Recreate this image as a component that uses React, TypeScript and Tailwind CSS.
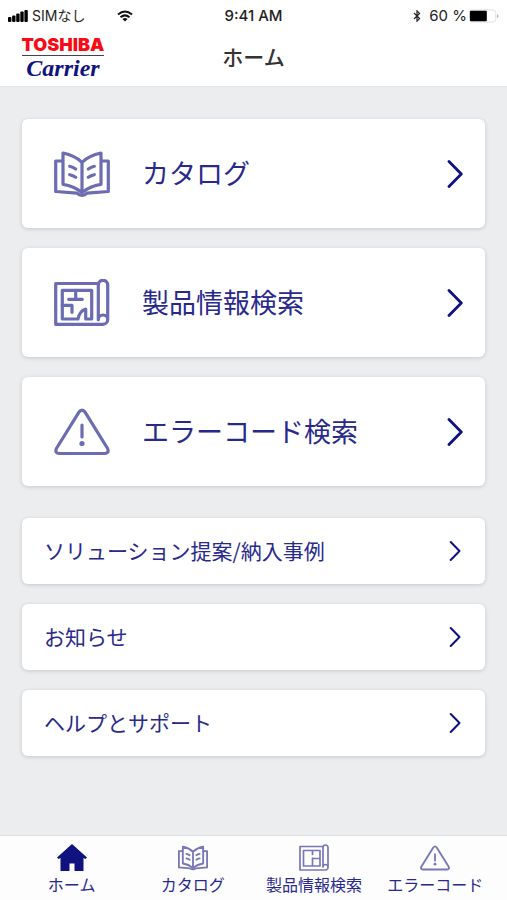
import type { ReactNode } from "react";

function BookIcon({ className, strokeWidth = 3.2 }: { className: string; strokeWidth?: number }) {
  return (
    <svg viewBox="0 0 56 46" fill="none" stroke="currentColor" strokeWidth={strokeWidth} strokeLinecap="round" strokeLinejoin="round" className={className} aria-hidden="true">
      <path d="M8.500 10H1.700V40.500L23 42.200Q25 44.300 28 44.300Q31 44.300 33 42.200L54.300 40.500V10H47.500" />
      <path d="M28 11.300Q21 4.500 9 2V33.300Q20 35 28 41.500Q36 35 47 33.300V2Q35 4.500 28 11.300ZV42" />
      <path d="M15.700 15.300Q19 16 21.700 18M15.700 23.700Q19 24.400 21.700 26.300M40.300 15.300Q37 16 34.300 18M40.300 23.700Q37 24.400 34.300 26.300" />
    </svg>
  );
}

function PlanIcon({ className }: { className: string }) {
  return (
    <svg viewBox="0 0 56 48" fill="none" stroke="currentColor" strokeWidth="3.2" strokeLinecap="round" strokeLinejoin="round" className={className} aria-hidden="true">
      <path d="M43.500 4.500H1.700V45.300H49A4.700 4.700 0 0 0 53.700 40.700V6A4.700 4.700 0 0 0 44.300 6V40.700A4.700 4.700 0 0 1 53.700 40.700" />
      <path d="M23.500 40H8.300V11.300H37.700V40H31.700V30Q25.500 32 24 40" />
      <path d="M21.700 11.300V20.300M14.700 20.300H28.300M8.300 26.300H18V33.300" />
    </svg>
  );
}

function SmallPlanIcon({ className }: { className: string }) {
  return (
    <svg viewBox="0 0 30 28" fill="none" stroke="currentColor" strokeWidth="1.7" strokeLinecap="round" strokeLinejoin="round" className={className} aria-hidden="true">
      <path d="M24 2.500H1V26H26.500A2.500 2.500 0 0 0 29 23.500V3.500A2.500 2.500 0 0 0 24 3.500V23A2.500 2.500 0 0 1 29 23" />
      <path d="M4.500 6.500H21V22H4.500ZM13.500 6.500V10.500M13.500 14V22M13.500 14.500H21" />
    </svg>
  );
}

function WarningIcon({ className, strokeWidth = 3.2 }: { className: string; strokeWidth?: number }) {
  return (
    <svg viewBox="0 0 56 48" fill="none" stroke="currentColor" strokeWidth={strokeWidth} strokeLinecap="round" strokeLinejoin="round" className={className} aria-hidden="true">
      <path d="M24.800 4.300Q28 0 31.200 4.300L53.600 40.500Q55.500 45.500 50.500 45.500H5.500Q.5 45.500 2.400 40.500Z" />
      <path d="M28 17V29" />
      <circle cx="28" cy="35.500" r="2.600" fill="currentColor" stroke="none" />
    </svg>
  );
}

function HomeIcon({ className }: { className: string }) {
  return (
    <svg viewBox="0 0 30 28" fill="currentColor" className={className} aria-hidden="true">
      <path d="M15 0L30 13.500L28.500 15L26.500 14V27H17.500V19.500H12.500V27H3.500V14L1.500 15L0 13.500Z" />
    </svg>
  );
}

function Chevron({ className }: { className: string }) {
  return (
    <svg viewBox="0 0 16 28" fill="none" stroke="currentColor" strokeWidth="2.8" strokeLinecap="round" strokeLinejoin="round" className={className} aria-hidden="true">
      <path d="M2 1.500L14.300 14L2 26.500" />
    </svg>
  );
}

function StatusBar() {
  return (
    <div className="grid h-7 grid-cols-3 items-center px-2 pt-1 font-['Inter','Noto_Sans_CJK_JP',sans-serif] text-sm text-[#222]">
      <div className="flex items-center gap-1">
        <svg viewBox="0 0 20 12" className="h-3 w-5" aria-hidden="true">
          <rect x="0" y="7" width="3.400" height="5" rx="1" />
          <rect x="4.100" y="5.500" width="3.400" height="6.500" rx="1" />
          <rect x="8.200" y="3.500" width="3.400" height="8.500" rx="1" />
          <rect x="12.300" y="1.500" width="3.400" height="10.500" rx="1" />
          <rect x="16.400" y="0" width="3.400" height="12" rx="1" />
        </svg>
        <span>SIMなし</span>
        <svg viewBox="0 0 16 12" fill="none" stroke="#111" strokeWidth="2" className="ml-7 h-3 w-4" aria-hidden="true">
          <path d="M1 4.500Q8 -1.500 15 4.500M3.500 7.200Q8 3.500 12.500 7.200" />
          <path d="M8 11.500L5.400 9Q8 7 10.600 9Z" fill="#111" stroke="none" />
        </svg>
      </div>
      <div className="text-center text-[15px] font-medium">9:41 AM</div>
      <div className="flex items-center justify-end">
        <svg viewBox="0 0 8 14" fill="none" stroke="#222" strokeWidth="1.4" className="mr-2 h-3 w-2" aria-hidden="true">
          <path d="M.5 3.500L7 10L4 13V1L7 4L.5 10.500" />
        </svg>
        <span className="mr-0.5 text-[15px]">60 %</span>
        <svg viewBox="0 0 32 14" className="h-3.5 w-[30px]" aria-hidden="true">
          <rect x=".5" y=".5" width="28" height="13" rx="3" fill="#fff" stroke="#ddd" />
          <rect x="1" y="1.500" width="18" height="11" rx="1" fill="#000" />
          <path d="M30 5V9Q31.500 8.500 31.500 7T30 5Z" fill="#aaa" />
        </svg>
      </div>
    </div>
  );
}

function Card({ icon, children }: { icon: ReactNode; children: ReactNode }) {
  return (
    <a href="#" className="flex h-[109px] items-center rounded-md bg-white pr-[22px] pl-8 text-[27px] shadow-[0_1px_4px_rgba(0,0,0,0.16)]">
      <span className="mr-8 text-[#6c6cb2]">{icon}</span>
      <span className="grow">{children}</span>
      <Chevron className="h-7 w-4 text-[#0d1280]" />
    </a>
  );
}

function Row({ children }: { children: ReactNode }) {
  return (
    <a href="#" className="flex h-[66px] items-center justify-between rounded-md bg-white pr-6 pl-[22px] text-[21px] shadow-[0_1px_4px_rgba(0,0,0,0.16)]">
      <span>{children}</span>
      <Chevron className="h-5 w-3 text-[#0d1280]" />
    </a>
  );
}

function Tab({ icon, children }: { icon: ReactNode; children: ReactNode }) {
  return (
    <a href="#" className="flex flex-col items-center pt-2 text-base leading-6 whitespace-nowrap">
      {icon}
      <span>{children}</span>
    </a>
  );
}

export default function App() {
  return (
    <div className="flex min-h-screen flex-col bg-[#ebedee] font-['Noto_Sans_CJK_JP',sans-serif] text-[#29298c]">
      <header className="border-b border-[#e2e3e4] bg-white">
        <StatusBar />
        <div className="grid h-[58px] grid-cols-3 items-center px-[22px]">
          <div className="w-[82px] text-center">
            <div className="flex justify-center border-b border-[#444] font-['Inter',sans-serif] text-lg leading-5 font-black text-[#fa0a14]">TOSHIBA</div>
            <div className="font-['Liberation_Serif',serif] text-2xl leading-6 font-bold text-[#10127f] italic">Carrier</div>
          </div>
          <h1 className="text-center text-[21px] font-medium text-[#333]">ホーム</h1>
        </div>
      </header>

      <main className="grow px-[22px] pt-8 pb-6">
        {/* Main menu */}
        <div className="space-y-5">
          <Card icon={<BookIcon className="h-[46px] w-14" />}>カタログ</Card>
          <Card icon={<PlanIcon className="h-12 w-14" />}>製品情報検索</Card>
          <Card icon={<WarningIcon className="h-12 w-14" />}>エラーコード検索</Card>
        </div>

        {/* Other links */}
        <div className="mt-8 space-y-5">
          <Row>ソリューション提案/納入事例</Row>
          <Row>お知らせ</Row>
          <Row>ヘルプとサポート</Row>
        </div>
      </main>

      <nav className="sticky bottom-0 grid h-[65px] grid-cols-4 border-t border-[#dfe0e2] bg-[#fdfdfe] px-[11px]">
        <Tab icon={<HomeIcon className="h-7 w-[30px] text-[#10127f]" />}>ホーム</Tab>
        <Tab icon={<BookIcon strokeWidth={3.4} className="h-7 w-[30px] text-[#7777b8]" />}>カタログ</Tab>
        <Tab icon={<SmallPlanIcon className="h-7 w-[30px] text-[#7777b8]" />}>製品情報検索</Tab>
        <Tab icon={<WarningIcon strokeWidth={3.4} className="h-7 w-[30px] text-[#7777b8]" />}>エラーコード</Tab>
      </nav>
    </div>
  );
}
